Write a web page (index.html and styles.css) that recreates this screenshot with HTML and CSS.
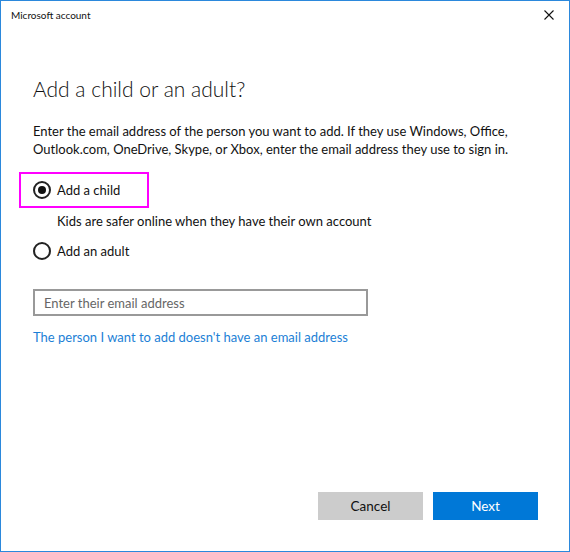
FILE: index.html
```html
<!DOCTYPE html>
<html>
<head>
<meta charset="utf-8">
<link rel="stylesheet" href="styles.css">
</head>
<body>
<div class="window">
  <div class="titlebar">
    <span class="title">Microsoft account</span>
    <span class="close">
      <svg width="10" height="10" viewBox="0 0 10 10"><path d="M0.5 0.5 L9.5 9.5 M9.5 0.5 L0.5 9.5" stroke="#111" stroke-width="1.1" fill="none"/></svg>
    </span>
  </div>
  <div class="content">
    <h1 class="heading">Add a child or an adult?</h1>
    <p class="intro">Enter the email address of the person you want to add. If they use Windows, Office, Outlook.com, OneDrive, Skype, or Xbox, enter the email address they use to sign in.</p>
    <div class="options">
      <div class="highlight">
        <label class="radio"><span class="dot checked"></span><span>Add a child</span></label>
      </div>
      <div class="hint">Kids are safer online when they have their own account</div>
      <label class="radio adult"><span class="dot"></span><span>Add an adult</span></label>
    </div>
    <div class="input">Enter their email address</div>
    <a class="link">The person I want to add doesn't have an email address</a>
  </div>
  <div class="footer">
    <button class="btn cancel">Cancel</button>
    <button class="btn next">Next</button>
  </div>
</div>
</body>
</html>
```
FILE: styles.css
```css
* { box-sizing: border-box; }
html, body { margin: 0; padding: 0; background: #fff; }
body { font-family: Lato, "Segoe UI", sans-serif; color: #000; }
.window {
  width: 570px;
  height: 552px;
  border: 1px solid #2b88dc;
  display: flex;
  flex-direction: column;
  background: #fff;
}
.titlebar {
  height: 29px;
  display: flex;
  align-items: center;
  justify-content: space-between;
  padding: 0 15px 1px 10px;
}
.title { font-size: 10px; color: #111; }
.close { display: flex; width: 10px; height: 10px; }
.content {
  flex: 1;
  padding: 0 0 0 32px;
}
.heading {
  margin: 47px 0 0 0;
  font-size: 21px;
  font-weight: 300;
  line-height: 24px;
  color: #111;
}
.intro {
  margin: 21px 0 0 0;
  font-size: 13px;
  line-height: 18px;
  color: #111;
  width: 490px;
}
.options { margin-top: 14px; }
.highlight {
  margin-left: -14px;
  width: 130px;
  height: 36px;
  border: 2px solid #ff00ff;
  display: flex;
  align-items: center;
  padding-left: 12px;
}
.radio { display: flex; align-items: center; font-size: 13px; color: #111; }
.dot {
  width: 18px;
  height: 18px;
  border: 2px solid #222;
  border-radius: 50%;
  margin-right: 6px;
  display: flex;
  align-items: center;
  justify-content: center;
}
.dot.checked::after {
  content: "";
  width: 8px;
  height: 8px;
  border-radius: 50%;
  background: #111;
}
.hint { margin: 4px 0 0 24px; font-size: 13px; line-height: 18px; color: #111; }
.adult { margin-top: 12px; }
.input {
  margin-top: 29px;
  width: 335px;
  height: 27px;
  border: 2px solid #999;
  padding-left: 9px;
  font-size: 13px;
  color: #666;
  display: flex;
  align-items: center;
}
.link {
  display: block;
  margin-top: 12px;
  font-size: 13px;
  line-height: 18px;
  color: #1c7fd6;
}
.footer {
  display: flex;
  justify-content: flex-end;
  gap: 10px;
  padding: 0 31px 31px 0;
}
.btn {
  width: 105px;
  height: 28px;
  border: none;
  font-family: Lato, sans-serif;
  font-size: 13.5px;
  padding: 0;
}
.cancel { background: #cccccc; color: #111; }
.next { background: #0078d7; color: #fff; }
```
